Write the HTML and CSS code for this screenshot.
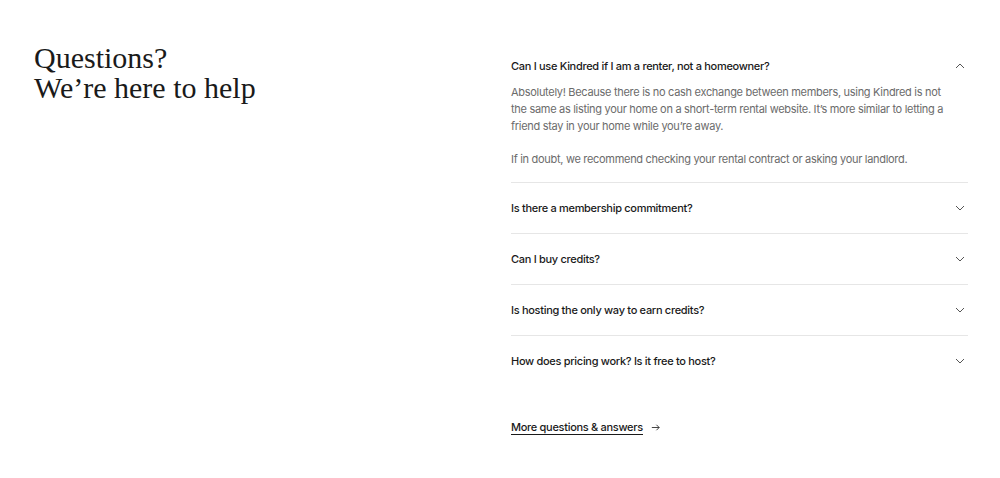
FILE: index.html
```html
<!DOCTYPE html>
<html lang="en">
<head>
    <meta charset="UTF-8">
    <meta name="viewport" content="width=device-width, initial-scale=1.0">
    <title>Questions? We're here to help</title>
    <link rel="stylesheet" href="styles.css">
</head>
<body>

    <section class="faq">
        <h2 class="faq-title">Questions?<br>We’re here to help</h2>

        <div class="faq-list">
            <div class="faq-item open">
                <div class="faq-question">
                    <span>Can I use Kindred if I am a renter, not a homeowner?</span>
                    <svg class="chevron" viewBox="0 0 12 12"><path d="M2 8 L6 4 L10 8"/></svg>
                </div>
                <div class="faq-answer">
                    <p>Absolutely! Because there is no cash exchange between members, using Kindred is not the same as listing your home on a short-term rental website. It’s more similar to letting a friend stay in your home while you’re away.</p>
                    <p>If in doubt, we recommend checking your rental contract or asking your landlord.</p>
                </div>
            </div>

            <div class="faq-item">
                <div class="faq-question">
                    <span>Is there a membership commitment?</span>
                    <svg class="chevron" viewBox="0 0 12 12"><path d="M2 4 L6 8 L10 4"/></svg>
                </div>
            </div>

            <div class="faq-item">
                <div class="faq-question">
                    <span>Can I buy credits?</span>
                    <svg class="chevron" viewBox="0 0 12 12"><path d="M2 4 L6 8 L10 4"/></svg>
                </div>
            </div>

            <div class="faq-item">
                <div class="faq-question">
                    <span>Is hosting the only way to earn credits?</span>
                    <svg class="chevron" viewBox="0 0 12 12"><path d="M2 4 L6 8 L10 4"/></svg>
                </div>
            </div>

            <div class="faq-item">
                <div class="faq-question">
                    <span>How does pricing work? Is it free to host?</span>
                    <svg class="chevron" viewBox="0 0 12 12"><path d="M2 4 L6 8 L10 4"/></svg>
                </div>
            </div>

            <a class="more-link" href="#">
                <span class="more-text">More questions &amp; answers</span>
                <svg class="arrow" viewBox="0 0 12 12"><path d="M2 6 H10 M7 3 L10 6 L7 9"/></svg>
            </a>
        </div>
    </section>

</body>
</html>
```

FILE: styles.css
```css
body {
    margin: 0;
    background-color: #fff;
    color: #111;
    font-family: Inter, "Liberation Sans", Arial, sans-serif;
    letter-spacing: -0.3px;
}
.faq {
    display: flex;
    padding: 41px 32px 0 34px;
}
.faq-title {
    width: 477px;
    flex-shrink: 0;
    margin: 2px 0 0;
    font-family: "Liberation Serif", "Times New Roman", serif;
    font-weight: normal;
    font-size: 30px;
    line-height: 30px;
    letter-spacing: 0;
    color: #1a1a1a;
}
.faq-list {
    width: 457px;
}
.faq-item {
    border-top: 1px solid #e6e6e6;
}
.faq-item:first-child {
    border-top: none;
}
.faq-question {
    display: flex;
    justify-content: space-between;
    align-items: center;
    padding: 17px 0;
    font-size: 11px;
    font-weight: 500;
    line-height: 16px;
    color: #1a1a1a;
}
.faq-item.open .faq-question {
    padding-bottom: 10px;
}
.faq-answer {
    padding: 0 24px 14px 0;
    font-size: 11px;
    line-height: 17px;
    color: #6b6b6b;
}
.faq-answer p {
    margin: 0 0 16px;
}
.faq-answer p:last-child {
    margin-bottom: 0;
}
.chevron {
    width: 12px;
    height: 12px;
    margin-right: 2px;
    fill: none;
    stroke: #555;
    stroke-width: 1;
}
.more-link {
    display: inline-flex;
    align-items: center;
    gap: 7px;
    margin-top: 34px;
    font-size: 11px;
    font-weight: 500;
    line-height: 16px;
    color: #1a1a1a;
    text-decoration: none;
}
.more-text {
    border-bottom: 1px solid #1a1a1a;
    line-height: 14px;
}
.arrow {
    width: 11px;
    height: 11px;
    fill: none;
    stroke: #333;
    stroke-width: 1;
}
```
